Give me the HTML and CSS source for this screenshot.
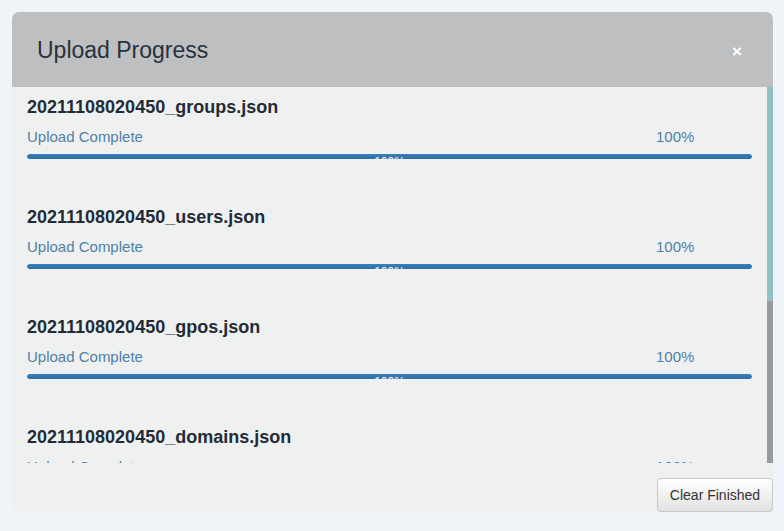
FILE: index.html
```html
<!DOCTYPE html>
<html>
<head>
<meta charset="utf-8">
<title>Upload Progress</title>
<link rel="stylesheet" href="styles.css">
</head>
<body>
<div class="modal">
  <div class="modal-header">
    <h3 class="modal-title">Upload Progress</h3>
    <button class="close" type="button">×</button>
  </div>
  <div class="modal-body">
    <div class="scroll-content">
      <div class="item">
        <h4 class="file-name">20211108020450_groups.json</h4>
        <div class="status-row"><span class="status">Upload Complete</span><span class="pct">100%</span></div>
        <div class="progress"><div class="progress-bar" style="width:100%"><span>100%</span></div></div>
      </div>
      <div class="item">
        <h4 class="file-name">20211108020450_users.json</h4>
        <div class="status-row"><span class="status">Upload Complete</span><span class="pct">100%</span></div>
        <div class="progress"><div class="progress-bar" style="width:100%"><span>100%</span></div></div>
      </div>
      <div class="item">
        <h4 class="file-name">20211108020450_gpos.json</h4>
        <div class="status-row"><span class="status">Upload Complete</span><span class="pct">100%</span></div>
        <div class="progress"><div class="progress-bar" style="width:100%"><span>100%</span></div></div>
      </div>
      <div class="item">
        <h4 class="file-name">20211108020450_domains.json</h4>
        <div class="status-row"><span class="status">Upload Complete</span><span class="pct">100%</span></div>
        <div class="progress"><div class="progress-bar" style="width:100%"><span>100%</span></div></div>
      </div>
      <div class="item">
        <h4 class="file-name">20211108020450_computers.json</h4>
        <div class="status-row"><span class="status">Upload Complete</span><span class="pct">100%</span></div>
        <div class="progress"><div class="progress-bar" style="width:100%"><span>100%</span></div></div>
      </div>
      <div class="item">
        <h4 class="file-name">20211108020450_ous.json</h4>
        <div class="status-row"><span class="status">Upload Complete</span><span class="pct">100%</span></div>
        <div class="progress"><div class="progress-bar" style="width:100%"><span>100%</span></div></div>
      </div>
    </div>
    <div class="scrollbar"><div class="thumb"></div></div>
  </div>
  <div class="modal-footer">
    <button class="btn" type="button">Clear Finished</button>
  </div>
</div>
</body>
</html>
```

FILE: styles.css
```css
html, body {
  margin: 0;
  padding: 0;
  background: #f0f4f9;
  font-family: "Liberation Sans", Arial, sans-serif;
}

.modal {
  margin: 12px 0 0 12px;
  width: 761px;
  height: 501px;
  display: flex;
  flex-direction: column;
  background: #eff1f0;
  border-radius: 7px 7px 0 7px;
  overflow: hidden;
}

.modal-header {
  height: 75px;
  flex: none;
  display: flex;
  align-items: center;
  padding: 0 25px;
  background: #bebfc0;
}

.modal-title {
  margin: 0;
  font-size: 23px;
  font-weight: normal;
  color: #28323d;
  line-height: 26px;
}

.close {
  margin-left: auto;
  margin-right: 6px;
  margin-top: 4px;
  padding: 0;
  border: 0;
  background: transparent;
  color: #ffffff;
  font-family: "Liberation Sans", Arial, sans-serif;
  font-size: 17px;
  font-weight: bold;
  line-height: 20px;
}

.modal-body {
  height: 376px;
  flex: none;
  display: flex;
}

.scroll-content {
  flex: 1;
  overflow: hidden;
  padding: 10px 15px 0 15px;
}

.scrollbar {
  width: 6px;
  flex: none;
  background: #9b9b9f;
  display: flex;
  flex-direction: column;
}

.thumb {
  height: 214px;
  background: #91c1c5;
}

.item {
  padding-bottom: 48px;
}

.file-name {
  margin: 0;
  font-size: 18px;
  line-height: 20px;
  font-weight: bold;
  color: #232c36;
}

.status-row {
  display: flex;
  margin-top: 10px;
  font-size: 15px;
  line-height: 20px;
  color: #5080a8;
}

.pct {
  margin-left: auto;
  width: 96px;
}

.progress {
  margin-top: 7px;
  height: 5px;
  border-radius: 3px;
  background: #e6e6e6;
  overflow: hidden;
}

.progress-bar {
  height: 100%;
  background: linear-gradient(to bottom, #3a80ba, #2d6da6);
  border-radius: 3px;
  text-align: center;
  overflow: hidden;
}

.progress-bar span {
  display: block;
  color: #ffffff;
  font-size: 12px;
  line-height: 16px;
}

.modal-footer {
  flex: 1;
  display: flex;
  justify-content: flex-end;
  align-items: flex-end;
  padding-bottom: 1px;
}

.btn {
  font-family: "Liberation Sans", Arial, sans-serif;
  font-size: 14px;
  line-height: 20px;
  padding: 6px 11px;
  color: #333333;
  background: linear-gradient(to bottom, #ffffff, #e2e2e2);
  border: 1px solid #c8c8c8;
  border-radius: 4px;
  width: 116px;
}
```
